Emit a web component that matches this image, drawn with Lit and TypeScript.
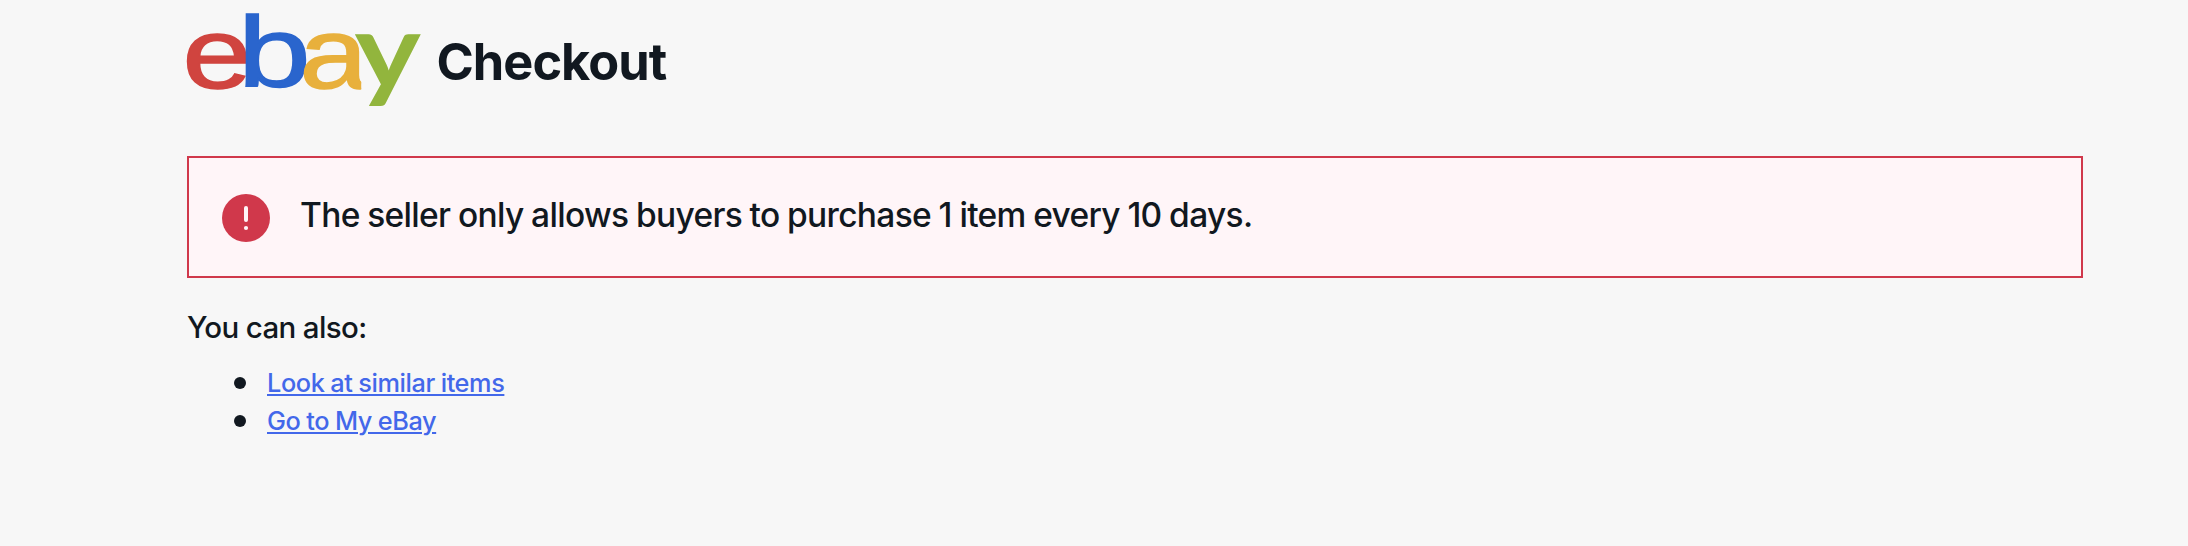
import { LitElement, html, css } from "lit";
import { customElement } from "lit/decorators.js";

@customElement("app-root")
export class AppRoot extends LitElement {
  static styles = css`
    :host {
      display: block;
      box-sizing: border-box;
      min-height: 546px;
      padding: 0 105px 0 187px;
      background: #f7f7f7;
      color: #111820;
      font-family: Inter, "Liberation Sans", sans-serif;
      font-weight: 500;
    }
    header { display: flex; height: 156px; }
    .logo { flex: none; width: 236px; height: 120px; overflow: visible; }
    .arial { font-family: "Liberation Sans", sans-serif; font-weight: 400; }
    .lato { font-family: Lato, sans-serif; font-weight: 700; }
    h1 {
      margin: 32px 0 0 13.5px;
      font-size: 50.5px;
      line-height: 60px;
      font-weight: 700;
      letter-spacing: -1px;
    }
    .notice {
      display: flex;
      align-items: center;
      box-sizing: border-box;
      width: 1896px;
      height: 122px;
      padding-left: 33px;
      border: 2px solid #d0384b;
      background: #fff5f8;
    }
    .alert { flex: none; width: 48px; height: 48px; margin-top: 2px; }
    .message {
      margin: 0 0 4px 30px;
      font-size: 33.5px;
      line-height: 44px;
      letter-spacing: -0.68px;
      word-spacing: -0.7px;
      white-space: nowrap;
    }
    h2 {
      margin: 31px 0 0;
      font-size: 29.5px;
      line-height: 36px;
      font-weight: 500;
      letter-spacing: -0.65px;
    }
    ul { margin: 19px 0 0; padding: 0 0 0 47px; list-style: none; }
    li { display: flex; align-items: center; height: 38px; font-size: 25.3px; }
    .dot { width: 12px; height: 12px; margin-right: 21px; border-radius: 50%; background: #111820; }
    a {
      color: #4368ea;
      line-height: 38px;
      letter-spacing: -0.4px;
      word-spacing: -0.5px;
      text-decoration: underline;
      text-decoration-thickness: 1.5px;
      text-underline-offset: 2px;
    }
  `;

  render() {
    return html`
      <header>
        <svg class="logo" viewBox="0 0 236 120" role="img" aria-label="ebay">
          <defs>
            <clipPath id="stem"><rect x="110" y="0" width="64.2" height="120" /></clipPath>
          </defs>
          <g class="arial">
            <text font-size="101" stroke-width="1.6" transform="translate(-4.6 87.6) scale(1.235 1)" fill="#d0443f" stroke="#d0443f">e</text>
            <text font-size="101" stroke-width="1.4" transform="translate(50.8 87.4) scale(1.3 1)" fill="#2a65cd" stroke="#2a65cd">b</text>
            <g clip-path="url(#stem)">
              <text font-size="101" stroke-width="1.6" transform="translate(112.6 87.6) scale(1.215 1)" fill="#e8b03c" stroke="#e8b03c">a</text>
            </g>
          </g>
          <text class="lato" font-size="103" transform="translate(167.5 88) scale(1.22 1.03)" fill="#92b53d">y</text>
        </svg>
        <h1>Checkout</h1>
      </header>
      <main>
        <section class="notice" role="alert">
          <svg class="alert" viewBox="0 0 48 48" aria-hidden="true">
            <circle cx="24" cy="24" r="24" fill="#d0384b" />
            <path d="M24 14v12" stroke="#fff5f8" stroke-width="4" stroke-linecap="round" />
            <circle cx="24" cy="34" r="2.1" fill="#fff5f8" />
          </svg>
          <p class="message">The seller only allows buyers to purchase 1 item every 10 days.</p>
        </section>
        <h2>You can also:</h2>
        <ul>
          <li><span class="dot"></span><a href="#">Look at similar items</a></li>
          <li><span class="dot"></span><a href="#">Go to My eBay</a></li>
        </ul>
      </main>
    `;
  }
}
